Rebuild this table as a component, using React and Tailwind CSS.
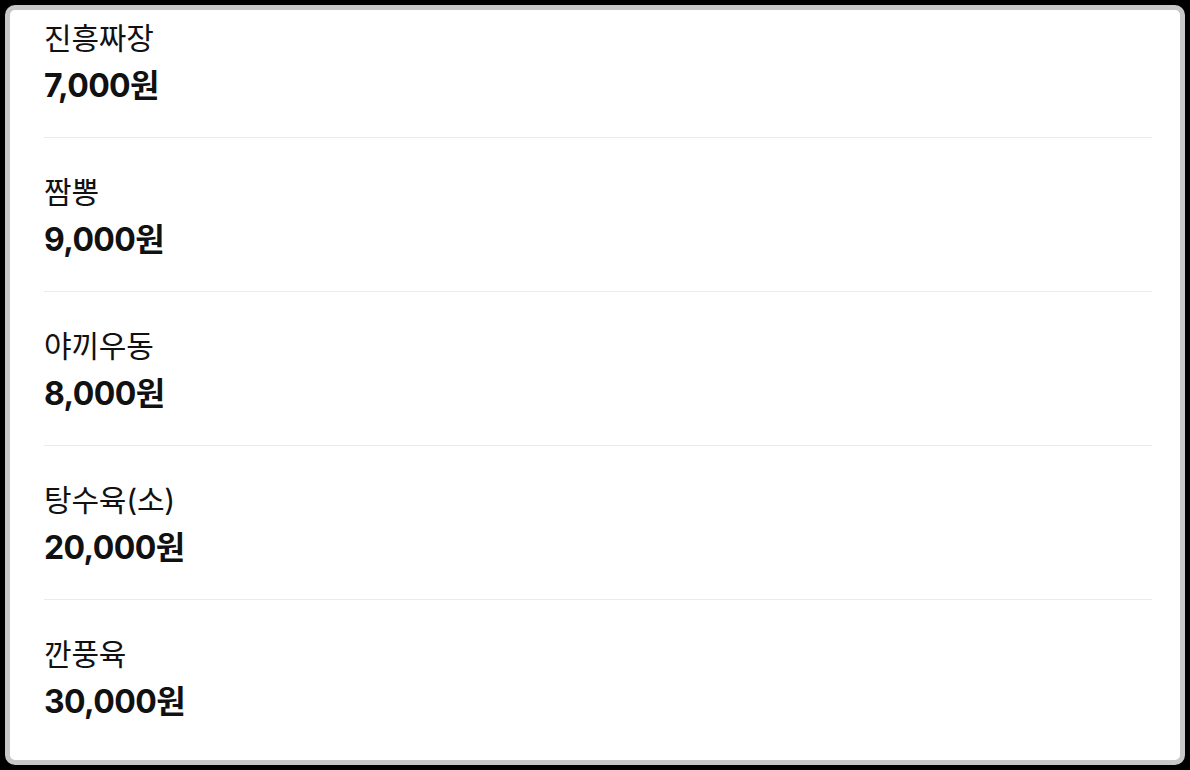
import React from "react";

const items = [
  { name: "진흥짜장", price: "7,000원" },
  { name: "짬뽕", price: "9,000원" },
  { name: "야끼우동", price: "8,000원" },
  { name: "탕수육(소)", price: "20,000원" },
  { name: "깐풍육", price: "30,000원" },
];

export default function App() {
  return (
    <div
      className="w-[1190px] h-[770px] bg-black p-[5px]"
      style={{ fontFamily: 'Inter, "Noto Sans CJK KR", sans-serif' }}
    >
      <div className="h-full w-full rounded-[10px] border-[5px] border-[#c8c8c8] bg-white overflow-hidden">
        <div className="pl-[34px] pr-[28px] mt-[-26px]">
          {items.map((it, i) => (
            <div
              key={it.name}
              className={
                "flex flex-col gap-[10px] pt-[36px] pb-[31px] " +
                (i < items.length - 1 ? "border-b border-[#ebebeb]" : "")
              }
            >
              <div className="text-[30px] leading-[36px] text-[#111111] tracking-[-0.2px]">
                {it.name}
              </div>
              <div className="text-[32px] leading-[40px] font-bold text-[#111111] tracking-[-0.6px]">
                {it.price}
              </div>
            </div>
          ))}
        </div>
      </div>
    </div>
  );
}
